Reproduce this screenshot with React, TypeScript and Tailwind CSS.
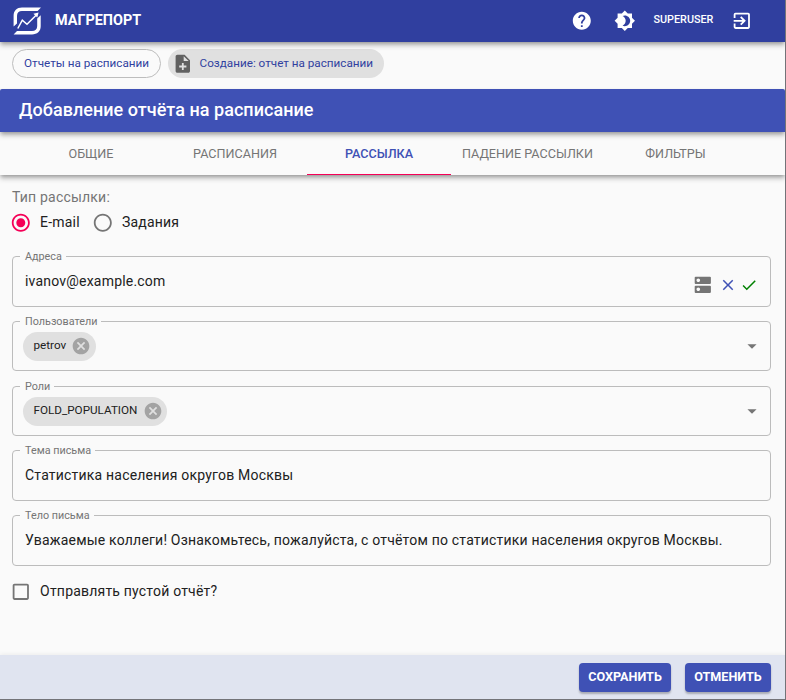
import type { ReactNode } from "react";
import {
  MdArrowDropDown,
  MdBrightness4,
  MdCancel,
  MdCheck,
  MdCheckBoxOutlineBlank,
  MdClose,
  MdDns,
  MdExitToApp,
  MdHelp,
  MdNoteAdd,
  MdRadioButtonChecked,
  MdRadioButtonUnchecked,
} from "react-icons/md";

function Logo() {
  return (
    <svg viewBox="0 0 28 28" className="h-7 w-7" fill="none">
      <path d="M28 0.600H9C3.800 0.600 0.600 3.800 0.600 8.800V19.500L4 16.500V9C4 5.700 5.800 4 9 4H24.600Z" fill="#fff" />
      <path d="M0.600 27.400H19C24.200 27.400 27.700 24.200 27.700 19.200V8.200L24.200 11.400V19C24.200 22.300 22.200 24 19 24H4Z" fill="#fff" />
      <path d="M4.800 21.500L9.300 13.100L14 17.300L23.600 7.800" stroke="#fff" strokeWidth="1.500" />
      <path d="M20.400 6.700L25.600 5.400L24.300 10.400Z" fill="#fff" />
    </svg>
  );
}

function Field({ label, className, children }: { label: string; className: string; children: ReactNode }) {
  return (
    <div className={`relative flex rounded-[4px] border border-[#bcbcbc] pl-[12px] ${className}`}>
      <span className="absolute -top-[6px] left-[7px] bg-[#fafafa] pr-[4px] pl-[5px] text-[10.8px] leading-[12px] tracking-normal text-[#757575]">
        {label}
      </span>
      {children}
    </div>
  );
}

function SelectField({ label, chip }: { label: string; chip: string }) {
  return (
    <Field label={label} className="mb-[15px] h-[50px] items-center justify-between pr-[7px]">
      <span className="-ml-[2px] flex h-[29px] items-center rounded-full bg-[#e0e0e0] pr-[4.500px] pl-[10.500px] text-[11.7px] tracking-normal text-[#212121]">
        <span className="pb-px">{chip}</span>
        <MdCancel className="ml-[5.200px] h-[20px] w-[20px] text-[#a3a3a3]" />
      </span>
      <MdArrowDropDown className="h-[22px] w-[22px] text-[#757575]" />
    </Field>
  );
}

const tabs = [
  { name: "ОБЩИЕ", width: "w-[144px]" },
  { name: "РАСПИСАНИЯ", width: "w-[144px]" },
  { name: "РАССЫЛКА", width: "w-[144px]", active: true },
  { name: "ПАДЕНИЕ РАССЫЛКИ", width: "w-[153px]" },
  { name: "ФИЛЬТРЫ", width: "w-[143px]" },
];

export default function App() {
  return (
    <div className="flex h-[700px] w-[786px] flex-col overflow-hidden border-r border-b border-[#737378] bg-[#fafafa] font-[Roboto,sans-serif] text-[#212121]">
      <header className="z-10 flex h-[42px] shrink-0 items-center bg-[#303f9f] pl-[13px] text-white shadow-[0_2px_4px_-1px_rgba(0,0,0,0.3),0_4px_5px_rgba(0,0,0,0.18)]">
        <Logo />
        <h1 className="ml-[14px] text-[14.4px] font-bold">МАГРЕПОРТ</h1>
        <div className="mr-[32px] ml-auto flex items-center">
          <MdHelp className="h-[21.600px] w-[21.600px]" />
          <MdBrightness4 className="ml-[21px] h-[21.600px] w-[21.600px]" />
          <span className="ml-[18px] pb-[2px] text-[10.8px] font-medium">SUPERUSER</span>
          <MdExitToApp className="ml-[18px] h-[21.600px] w-[21.600px]" />
        </div>
      </header>

      <nav className="flex h-[47px] shrink-0 gap-[7px] pt-[7px] pl-[12px] text-[11.7px] text-[#303f9f]">
        <a className="flex h-[29px] items-center rounded-full border border-[#bdbdbd] px-[11px]">Отчеты на расписании</a>
        <a className="flex h-[29px] items-center rounded-full bg-[#e0e0e0] pr-[11px] pl-[4px]">
          <MdNoteAdd className="h-[21.600px] w-[21.600px] text-[#616161]" />
          <span className="ml-[6px]">Создание: отчет на расписании</span>
        </a>
      </nav>

      <div className="z-10 flex h-[43px] shrink-0 items-center rounded-t-[2px] bg-[#3f51b5] pl-[19px] shadow-[0_2px_4px_-1px_rgba(0,0,0,0.3),0_4px_5px_rgba(0,0,0,0.18)]">
        <h2 className="pb-[2px] text-[18px] font-medium tracking-[0.04px] text-white">Добавление отчёта на расписание</h2>
      </div>

      <div className="flex h-[43px] shrink-0 bg-[#fafafa] pl-[19px] text-[12.6px] shadow-[0_2px_4px_-1px_rgba(0,0,0,0.3),0_4px_5px_rgba(0,0,0,0.18)]">
        {tabs.map((tab) => (
          <div
            key={tab.name}
            className={`flex items-center justify-center border-b pt-[2px] ${tab.width} ${
              tab.active ? "border-[#f50057] font-medium text-[#3f51b5]" : "border-transparent text-[#757575]"
            }`}
          >
            {tab.name}
          </div>
        ))}
      </div>

      <main className="flex-1 pt-[13px] pr-[14px] pl-[12px] text-[14px] tracking-[0.2px]">
        <p className="h-[18px] leading-[18px] text-[#757575]">Тип рассылки:</p>
        <div className="flex h-[34px] items-center">
          <MdRadioButtonChecked className="-ml-[2px] h-[21.600px] w-[21.600px] text-[#f50057]" />
          <span className="ml-[8.500px] pb-px">E-mail</span>
          <MdRadioButtonUnchecked className="ml-[12.500px] h-[21.600px] w-[21.600px] text-[#757575]" />
          <span className="ml-[8px] pb-px">Задания</span>
        </div>

        <div className="pt-[16px]">
          <Field label="Адреса" className="mb-[14px] h-[51px] items-center pr-[12px]">
            <span>ivanov@example.com</span>
            <MdDns className="mt-[6px] ml-auto h-[21.600px] w-[21.600px] text-[#757575]" />
            <MdClose className="mt-[6px] ml-[5px] h-[18px] w-[18px] text-[#3f51b5]" />
            <MdCheck className="mt-[6px] ml-[3px] h-[18px] w-[18px] text-[#008000]" />
          </Field>
          <SelectField label="Пользователи" chip="petrov" />
          <SelectField label="Роли" chip="FOLD_POPULATION" />
          <Field label="Тема письма" className="-mt-px mb-[14px] h-[51px] items-center">
            <span>Статистика населения округов Москвы</span>
          </Field>
          <Field label="Тело письма" className="h-[51px] items-center">
            <span>Уважаемые коллеги! Ознакомьтесь, пожалуйста, с отчётом по статистики населения округов Москвы.</span>
          </Field>
        </div>

        <div className="flex items-center pt-[15px]">
          <MdCheckBoxOutlineBlank className="-ml-[2px] h-[21.600px] w-[21.600px] text-[#757575]" />
          <span className="ml-[8.500px] pb-px">Отправлять пустой отчёт?</span>
        </div>
      </main>

      <footer className="flex h-[44px] shrink-0 items-center justify-end gap-[14px] bg-[#e0e4f0] pr-[14px] text-[12.6px] font-bold text-white shadow-[0_-1px_4px_rgba(0,0,0,0.06)]">
        <button className="h-[29px] w-[92px] rounded-[4px] bg-[#3f51b5] shadow-[0_2px_2px_rgba(0,0,0,0.25)]">СОХРАНИТЬ</button>
        <button className="h-[29px] w-[86px] rounded-[4px] bg-[#3f51b5] shadow-[0_2px_2px_rgba(0,0,0,0.25)]">ОТМЕНИТЬ</button>
      </footer>
    </div>
  );
}
